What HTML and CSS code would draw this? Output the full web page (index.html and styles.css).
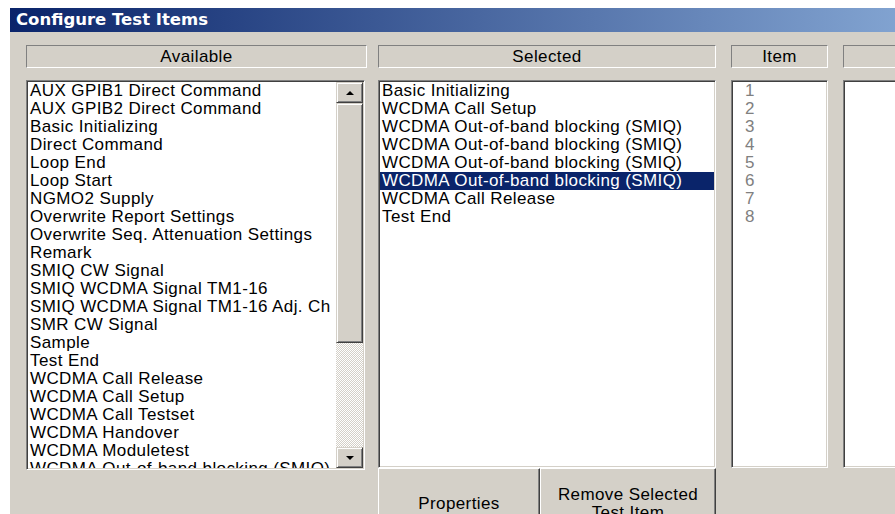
FILE: index.html
```html
<!DOCTYPE html>
<html>
<head>
<meta charset="utf-8">
<title>Configure Test Items</title>
<link rel="stylesheet" href="styles.css">
</head>
<body>
<div class="window">
  <div class="titlebar">Configure Test Items</div>
  <div class="content">
    <div class="col col-available">
      <div class="header">Available</div>
      <div class="listbox listbox-available">
        <ul class="items">
          <li>AUX GPIB1 Direct Command</li>
          <li>AUX GPIB2 Direct Command</li>
          <li>Basic Initializing</li>
          <li>Direct Command</li>
          <li>Loop End</li>
          <li>Loop Start</li>
          <li>NGMO2 Supply</li>
          <li>Overwrite Report Settings</li>
          <li>Overwrite Seq. Attenuation Settings</li>
          <li>Remark</li>
          <li>SMIQ CW Signal</li>
          <li>SMIQ WCDMA Signal TM1-16</li>
          <li>SMIQ WCDMA Signal TM1-16 Adj. Ch</li>
          <li>SMR CW Signal</li>
          <li>Sample</li>
          <li>Test End</li>
          <li>WCDMA Call Release</li>
          <li>WCDMA Call Setup</li>
          <li>WCDMA Call Testset</li>
          <li>WCDMA Handover</li>
          <li>WCDMA Moduletest</li>
          <li>WCDMA Out-of-band blocking (SMIQ)</li>
        </ul>
        <div class="scrollbar">
          <div class="sb-btn"><span class="arrow arrow-up"></span></div>
          <div class="sb-thumb"></div>
          <div class="sb-track"></div>
          <div class="sb-btn"><span class="arrow arrow-down"></span></div>
        </div>
      </div>
    </div>

    <div class="col col-selected">
      <div class="header">Selected</div>
      <div class="listbox listbox-short">
        <ul class="items">
          <li>Basic Initializing</li>
          <li>WCDMA Call Setup</li>
          <li>WCDMA Out-of-band blocking (SMIQ)</li>
          <li>WCDMA Out-of-band blocking (SMIQ)</li>
          <li>WCDMA Out-of-band blocking (SMIQ)</li>
          <li class="is-selected">WCDMA Out-of-band blocking (SMIQ)</li>
          <li>WCDMA Call Release</li>
          <li>Test End</li>
        </ul>
      </div>
      <div class="buttons">
        <button class="btn btn-properties">Properties</button>
        <button class="btn btn-remove">Remove Selected<br>Test Item</button>
      </div>
    </div>

    <div class="col col-item">
      <div class="header">Item</div>
      <div class="listbox listbox-short">
        <ul class="items items-numbers">
          <li>1</li>
          <li>2</li>
          <li>3</li>
          <li>4</li>
          <li>5</li>
          <li>6</li>
          <li>7</li>
          <li>8</li>
        </ul>
      </div>
    </div>

    <div class="col col-extra">
      <div class="header">&nbsp;</div>
      <div class="listbox listbox-short"></div>
    </div>
  </div>
</div>
</body>
</html>
```

FILE: styles.css
```css
html, body {
  margin: 0;
  padding: 0;
  background: #ffffff;
  overflow: hidden;
  height: 514px;
}

.window {
  margin: 8px 0 0 10px;
  width: 1160px;
  height: 600px;
  background: #d4d0c8;
  font-family: "Liberation Sans", Arial, sans-serif;
  font-size: 17px;
  letter-spacing: 0.4px;
  color: #000;
}

.titlebar {
  height: 24px;
  line-height: 24px;
  padding-left: 6px;
  background: linear-gradient(to right, #0a246a, #a6caf0);
  color: #fff;
  font-family: "DejaVu Sans", Verdana, sans-serif;
  font-weight: bold;
  font-size: 16.5px;
  letter-spacing: 0;
}

.content {
  display: flex;
  padding: 13px 0 0 16px;
  gap: 15px;
}

.col {
  display: flex;
  flex-direction: column;
}

.col-available { width: 341px; margin-right: -4px; }
.col-selected  { width: 338px; }
.col-item      { width: 97px; }
.col-extra     { flex: 1; }

/* static caption boxes above the lists */
.header {
  height: 21px;
  line-height: 21px;
  text-align: center;
  border: 1px solid;
  border-color: #808080 #ffffff #ffffff #808080;
  margin-bottom: 12px;
}

/* sunken list boxes */
.listbox {
  background: #fff;
  border: 1px solid;
  border-color: #808080 #ffffff #ffffff #808080;
  box-shadow: inset 1px 1px 0 #404040, inset -1px -1px 0 #d4d0c8;
  padding: 1px;
  box-sizing: border-box;
  overflow: hidden;
}

.listbox-available {
  display: flex;
  width: 339px;
  height: 390px;
}

.listbox-short {
  height: 388px;
}

.items {
  list-style: none;
  margin: 0;
  padding: 0;
  flex: 1;
  overflow: hidden;
  white-space: nowrap;
}

.items li {
  height: 18px;
  line-height: 18px;
  padding-left: 2px;
}

.items li.is-selected {
  background: #0a246a;
  color: #fff;
}

.items-numbers li {
  color: #808080;
  padding-left: 12px;
}

/* vertical scroll bar */
.scrollbar {
  width: 27px;
  display: flex;
  flex-direction: column;
}

.sb-btn, .sb-thumb {
  background: #d4d0c8;
  border: 1px solid;
  border-color: #d4d0c8 #404040 #404040 #d4d0c8;
  box-shadow: inset 1px 1px 0 #fff, inset -1px -1px 0 #808080;
  box-sizing: border-box;
}

.sb-btn {
  height: 21px;
  display: flex;
  align-items: center;
  justify-content: center;
}

.sb-thumb {
  height: 240px;
}

.sb-track {
  flex: 1;
  background: repeating-conic-gradient(#ffffff 0 25%, #d4d0c8 0 50%) 0 0 / 2px 2px;
}

.arrow {
  width: 0;
  height: 0;
  border-left: 4px solid transparent;
  border-right: 4px solid transparent;
}

.arrow-up   { border-bottom: 4px solid #000; }
.arrow-down { border-top: 4px solid #000; }

/* push buttons below the selected list */
.buttons {
  display: flex;
}

.btn {
  height: 72px;
  margin: 0;
  padding: 0;
  background: #d4d0c8;
  border: 1px solid;
  border-color: #ffffff #404040 #404040 #ffffff;
  box-shadow: inset -1px -1px 0 #808080;
  font: inherit;
  letter-spacing: inherit;
  line-height: 18px;
  color: #000;
  text-align: center;
}

.btn-properties { width: 162px; }
.btn-remove     { width: 176px; }
```
